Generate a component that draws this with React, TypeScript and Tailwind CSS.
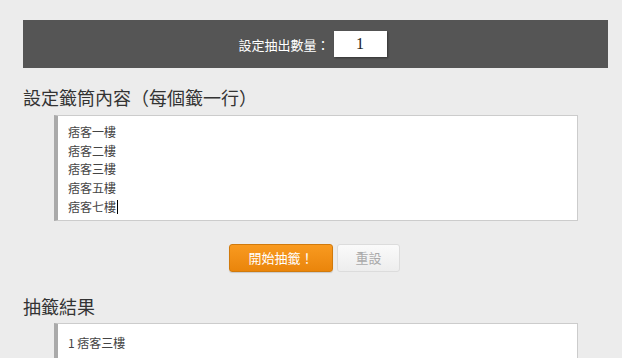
const entries = ["痞客一樓", "痞客二樓", "痞客三樓", "痞客五樓", "痞客七樓"];

const cjk = { fontFamily: '"Noto Sans CJK TC", "Noto Sans", sans-serif' };

export default function App() {
  return (
    <div className="min-h-[358px] bg-[#ececec] px-[23px] pt-[20px] text-[#333]" style={cjk}>
      {/* count bar */}
      <div className="flex h-[48px] w-[585px] items-center justify-center gap-[4px] bg-[#555555] pr-[6px]">
        <span className="text-[13px] leading-none text-white">設定抽出數量：</span>
        <div
          className="flex h-[26px] w-[53px] items-center justify-center bg-white text-[16px] text-[#222] shadow-[1px_1px_2px_rgba(0,0,0,0.4)]"
          style={{ fontFamily: '"Liberation Serif", serif' }}
        >
          1
        </div>
      </div>

      <h2 className="mt-[17px] text-[18px] leading-[24px] text-[#333]">設定籤筒內容（每個籤一行）</h2>

      <div className="ml-[31px] mt-[6px] h-[106px] w-[524px] border border-l-[4px] border-[#cccccc] border-l-[#aaaaaa] bg-white pl-[10px] pt-[7px]">
        {entries.map((e, i) => (
          <div key={e} className="flex h-[18.6px] items-center text-[12px] text-[#444]">
            {e}
            {i === entries.length - 1 && <span className="ml-px inline-block h-[14px] w-px bg-black" />}
          </div>
        ))}
      </div>

      <div className="mt-[23px] flex justify-center gap-[4px] pl-[7px]">
        <button className="h-[28px] w-[104px] rounded-[3px] border border-[#d17a0c] bg-gradient-to-b from-[#f99a1f] to-[#ea850a] text-[13px] text-white shadow-[0_1px_1px_rgba(0,0,0,0.15)]">
          開始抽籤！
        </button>
        <button className="h-[28px] w-[63px] rounded-[3px] border border-[#dcdcdc] bg-gradient-to-b from-[#fafafa] to-[#ededed] text-[13px] text-[#aaaaaa]">
          重設
        </button>
      </div>

      <h2 className="mt-[22px] text-[18px] leading-[24px] text-[#333]">抽籤結果</h2>

      <div className="ml-[31px] mt-[5px] h-[40px] w-[524px] border border-l-[4px] border-[#cccccc] border-l-[#aaaaaa] bg-white pl-[10px] pt-[10px] text-[12px] text-[#444]">
        1 痞客三樓
      </div>
    </div>
  );
}
